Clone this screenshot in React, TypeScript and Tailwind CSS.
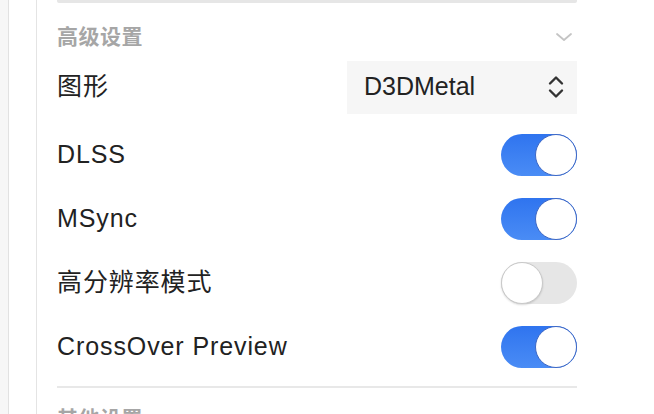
import React, { useState } from 'react';

const font = { fontFamily: '"Liberation Sans", "Noto Sans CJK SC", sans-serif' };

type ToggleProps = { on: boolean; onChange: () => void };

const Toggle: React.FC<ToggleProps> = ({ on, onChange }) => (
  <button
    onClick={onChange}
    className={`relative h-[42px] w-[76px] shrink-0 rounded-full ${
      on ? 'bg-gradient-to-b from-[#2f74ef] to-[#4a8cf5]' : 'bg-[#e6e6e6]'
    }`}
  >
    <span
      className={`absolute top-0 h-[42px] w-[42px] rounded-full bg-white ${
        on ? 'right-0 border-[1.5px] border-[#3d67c4]' : 'left-0 border-[1.5px] border-[#c9c9c9] shadow-[0_1px_2px_rgba(0,0,0,0.15)]'
      }`}
    />
  </button>
);

const Row: React.FC<{ label: string; children: React.ReactNode }> = ({ label, children }) => (
  <div className="flex h-[64px] items-center justify-between">
    <span className="text-[25px] tracking-[0.9px] text-[#222222]">{label}</span>
    {children}
  </div>
);

export default function App() {
  const [toggles, setToggles] = useState({ dlss: true, msync: true, hires: false, preview: true });
  const flip = (k: keyof typeof toggles) => setToggles((t) => ({ ...t, [k]: !t[k] }));

  return (
    <div className="flex h-[414px] w-[654px] overflow-hidden bg-white" style={font}>
      <div className="w-[9px] shrink-0 border-r border-[#e2e2e2] bg-[#f7f7f7]" />
      <div className="w-[28px] shrink-0 border-r border-[#e4e4e4] bg-white" />
      <div className="ml-[20px] w-[520px] shrink-0">
        <div className="h-[3px] rounded-b-[2px] bg-[#e6e6e6]" />

        <div className="flex items-center justify-between pt-[20px] pb-[4px]">
          <span className="text-[21px] leading-[28px] font-bold tracking-[0.5px] text-[#a6a6a6]">高级设置</span>
          <svg width="18" height="12" viewBox="0 0 18 12" className="mr-[4px]">
            <path d="M2 3l7 6 7-6" fill="none" stroke="#c4c4c4" strokeWidth="1.8" strokeLinecap="round" strokeLinejoin="round" />
          </svg>
        </div>

        <Row label="图形">
          <div className="flex h-[53px] w-[230px] items-center justify-between bg-[#f6f6f6] pl-[17px] pr-[12px]">
            <span className="text-[25px] text-[#222222]">D3DMetal</span>
            <svg width="18" height="24" viewBox="0 0 18 24">
              <path d="M3 8.5l6-6 6 6M3 15.5l6 6 6-6" fill="none" stroke="#333333" strokeWidth="2.4" strokeLinecap="round" strokeLinejoin="round" />
            </svg>
          </div>
        </Row>

        <div className="mt-[4px]">
          <Row label="DLSS">
            <Toggle on={toggles.dlss} onChange={() => flip('dlss')} />
          </Row>
          <Row label="MSync">
            <Toggle on={toggles.msync} onChange={() => flip('msync')} />
          </Row>
          <Row label="高分辨率模式">
            <Toggle on={toggles.hires} onChange={() => flip('hires')} />
          </Row>
          <Row label="CrossOver Preview">
            <Toggle on={toggles.preview} onChange={() => flip('preview')} />
          </Row>
        </div>

        <div className="mt-[7px] h-[2px] bg-[#e8e8e8]" />

        <div className="pt-[17px]">
          <span className="text-[21px] leading-[28px] font-bold tracking-[0.5px] text-[#a6a6a6]">其他设置</span>
        </div>
      </div>
    </div>
  );
}
